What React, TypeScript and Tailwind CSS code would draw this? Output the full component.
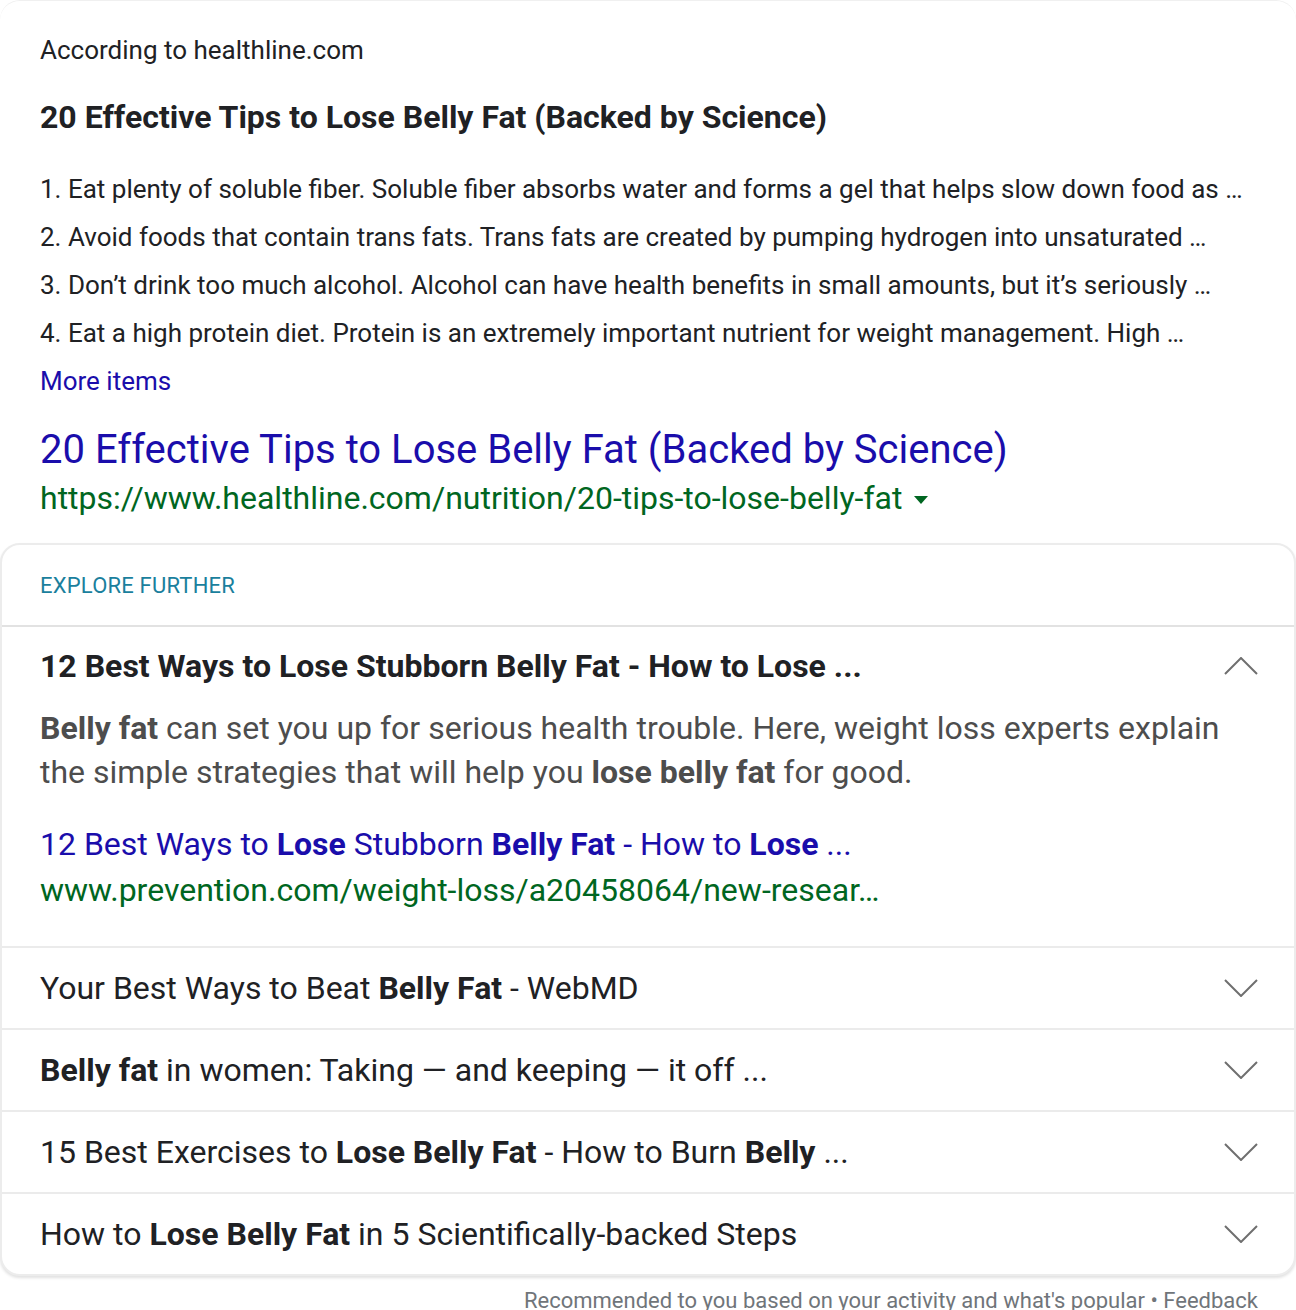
import React from "react";

function Chevron({ up }: { up?: boolean }) {
  return (
    <svg width="34" height="18" viewBox="0 0 34 18" className="shrink-0">
      <polyline
        points={up ? "1,17 17,1 33,17" : "1,1 17,17 33,1"}
        fill="none"
        stroke="#6f6f6f"
        strokeWidth="2"
      />
    </svg>
  );
}

function Row({ children, last }: { children: React.ReactNode; last?: boolean }) {
  return (
    <div
      className={
        "flex items-center justify-between pl-[38px] pr-[36px] " +
        (last ? "h-[80px]" : "h-[82px] border-b-2 border-[#ebebeb]")
      }
    >
      <div className="text-[32px] text-[#202124] leading-[40px] whitespace-nowrap">{children}</div>
      <Chevron />
    </div>
  );
}

export default function App() {
  return (
    <div className="w-[1296px] h-[1310px] overflow-hidden bg-white" style={{ fontFamily: "Roboto, 'Liberation Sans', sans-serif" }}>
      <div className="rounded-t-[20px] border-t border-[#f0f0f0] pl-[40px] pr-[38px] pt-[32px]">
        <div className="h-[34px] leading-[34px] text-[26px] text-[#202124]">According to healthline.com</div>
        <div className="mt-[30px] h-[40px] leading-[40px] text-[32px] font-bold text-[#202124] whitespace-nowrap">
          20 Effective Tips to Lose Belly Fat (Backed by Science)
        </div>
        <div className="mt-[28px] text-[26px] text-[#202124]">
          <div className="h-[48px] leading-[48px] whitespace-nowrap">1. Eat plenty of soluble fiber. Soluble fiber absorbs water and forms a gel that helps slow down food as …</div>
          <div className="h-[48px] leading-[48px] whitespace-nowrap">2. Avoid foods that contain trans fats. Trans fats are created by pumping hydrogen into unsaturated …</div>
          <div className="h-[48px] leading-[48px] whitespace-nowrap">3. Don’t drink too much alcohol. Alcohol can have health benefits in small amounts, but it’s seriously …</div>
          <div className="h-[48px] leading-[48px] whitespace-nowrap">4. Eat a high protein diet. Protein is an extremely important nutrient for weight management. High …</div>
        </div>
        <div className="h-[48px] leading-[48px] text-[26px] text-[#1a0dab]">More items</div>
        <div className="mt-[21px] h-[48px] leading-[48px] text-[40px] text-[#1a0dab] whitespace-nowrap">
          20 Effective Tips to Lose Belly Fat (Backed by Science)
        </div>
        <div className="h-[48px] leading-[48px] text-[32px] text-[#006621] flex items-center gap-[12px] whitespace-nowrap">
          <span>https://www.healthline.com/nutrition/20-tips-to-lose-belly-fat</span>
          <svg width="14" height="8" viewBox="0 0 14 8" className="mt-[4px]">
            <polygon points="0,0 14,0 7,8" fill="#006621" />
          </svg>
        </div>
      </div>

      <div className="mt-[21px] rounded-[20px] border-2 border-[#ececec] shadow-[0_2px_3px_rgba(0,0,0,0.12)] bg-white">
        <div className="h-[82px] flex items-center pl-[38px] text-[22px] text-[#1a7f9d] tracking-[0.2px] border-b-2 border-[#e2e2e2]">
          EXPLORE FURTHER
        </div>
        <div className="border-b-2 border-[#ebebeb] pb-[33px]">
          <div className="h-[78px] flex items-center justify-between pl-[38px] pr-[36px]">
            <div className="text-[32px] font-bold text-[#202124] whitespace-nowrap">
              12 Best Ways to Lose Stubborn Belly Fat - How to Lose ...
            </div>
            <Chevron up />
          </div>
          <div className="pl-[38px] pr-[30px] mt-[1px] text-[32px] leading-[44px] text-[#4d4d4d] whitespace-nowrap">
            <b className="font-bold">Belly fat</b> can set you up for serious health trouble. Here, weight loss experts explain
            <br />
            the simple strategies that will help you <b className="font-bold">lose belly fat</b> for good.
          </div>
          <div className="pl-[38px] mt-[27px] h-[46px] leading-[46px] text-[32px] text-[#1a0dab] whitespace-nowrap">
            12 Best Ways to <b className="font-bold">Lose</b> Stubborn <b className="font-bold">Belly Fat</b> - How to <b className="font-bold">Lose</b> ...
          </div>
          <div className="pl-[38px] h-[46px] leading-[46px] text-[32px] text-[#006621] whitespace-nowrap">
            www.prevention.com/weight-loss/a20458064/new-resear…
          </div>
        </div>
        <div>
          <Row>
            Your Best Ways to Beat <b className="font-bold">Belly Fat</b> - WebMD
          </Row>
          <Row>
            <b className="font-bold">Belly fat</b> in women: Taking — and keeping — it off ...
          </Row>
          <Row>
            15 Best Exercises to <b className="font-bold">Lose Belly Fat</b> - How to Burn <b className="font-bold">Belly</b> ...
          </Row>
          <Row last>
            How to <b className="font-bold">Lose Belly Fat</b> in 5 Scientifically-backed Steps
          </Row>
        </div>
      </div>
      <div className="h-[48px] flex items-center justify-end pr-[38px] text-[22px] text-[#70757a] whitespace-nowrap">
        Recommended to you based on your activity and what's popular • Feedback
      </div>
    </div>
  );
}
